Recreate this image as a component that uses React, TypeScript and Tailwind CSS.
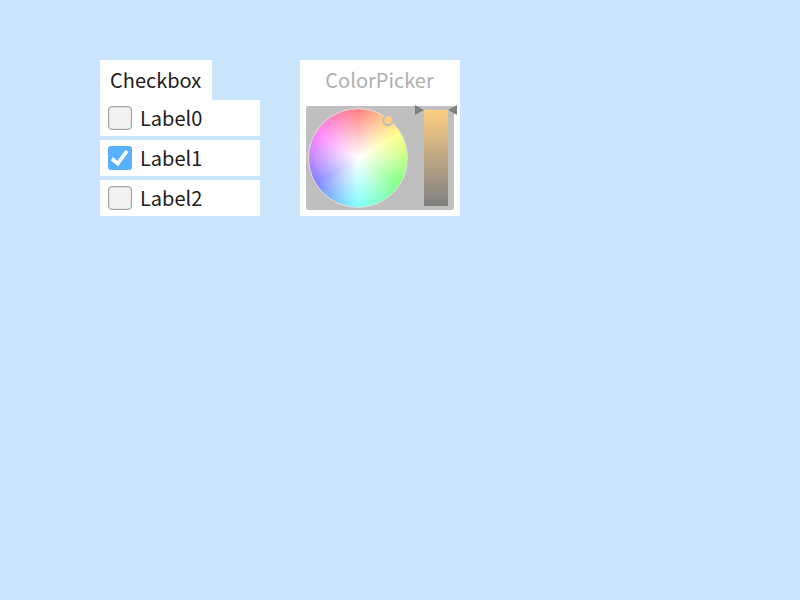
const LABELS = ["Label0", "Label1", "Label2"];

function CheckItem({ label, checked }: { label: string; checked: boolean }) {
  return (
    <div className="flex h-9 w-40 items-center gap-2 bg-white px-2">
      {checked ? (
        <div className="h-6 w-6 rounded-[3px] bg-[#58b0ff]">
          <svg viewBox="0 0 24 24" className="h-6 w-6" fill="none">
            <path d="M3.9 12.8L9.8 17.6L19 5" stroke="#fff" strokeWidth="3.8" />
          </svg>
        </div>
      ) : (
        <div className="h-6 w-6 rounded-[4px] border border-[#a2a2a2] bg-[#f1f1f1] shadow-[inset_0_0_0_0.5px_#d8d8d8]" />
      )}
      <span className="text-xl leading-9 text-[#202020]">{label}</span>
    </div>
  );
}

function ColorPicker() {
  return (
    <div className="relative flex h-[104px] w-[148px] rounded-[2px] bg-[#bfbfbf] pl-0.5 pt-0.5">
      <div className="h-[100px] w-[100px] rounded-full border border-[#e0e0e0] bg-[radial-gradient(circle_closest-side,#fff,#ffffff00),conic-gradient(#ff8080,#ffff80,#80ff80,#80ffff,#8080ff,#ff80ff,#ff8080)]" />
      <div className="ml-4 mt-0.5 h-24 w-6 bg-linear-to-b from-[#ffcf80] to-[#808080]" />
      <svg className="absolute left-[76px] top-2 h-3 w-3 overflow-visible" viewBox="0 0 12 12">
        <circle cx="6.3" cy="6.2" r="5" fill="#ffcf80" stroke="#bfbfbf" strokeWidth="2.2" />
      </svg>
      <svg className="absolute left-[109px] -top-px h-[10px] w-[42px]" viewBox="0 0 42 10">
        <path d="M0 0L9 5L0 10ZM42 0L33 5L42 10Z" fill="#808080" />
      </svg>
    </div>
  );
}

export default function App() {
  return (
    <div className="flex h-[600px] w-[800px] items-start gap-10 bg-[#cbe5ff] pl-[100px] pt-[60px] font-['Noto_Sans_CJK_JP','Noto_Sans',sans-serif]">
      <div className="w-40">
        <div className="flex h-10 w-28 items-center bg-white pl-2.5 text-xl leading-10 text-[#202020]">
          Checkbox
        </div>
        <div className="flex flex-col gap-1">
          {LABELS.map((label, i) => (
            <CheckItem key={label} label={label} checked={i === 1} />
          ))}
        </div>
      </div>
      <div className="h-[156px] w-40 bg-white px-1.5">
        <div className="mb-1.5 h-10 pr-px text-center text-xl leading-10 text-[#afafaf]">ColorPicker</div>
        <ColorPicker />
      </div>
    </div>
  );
}
